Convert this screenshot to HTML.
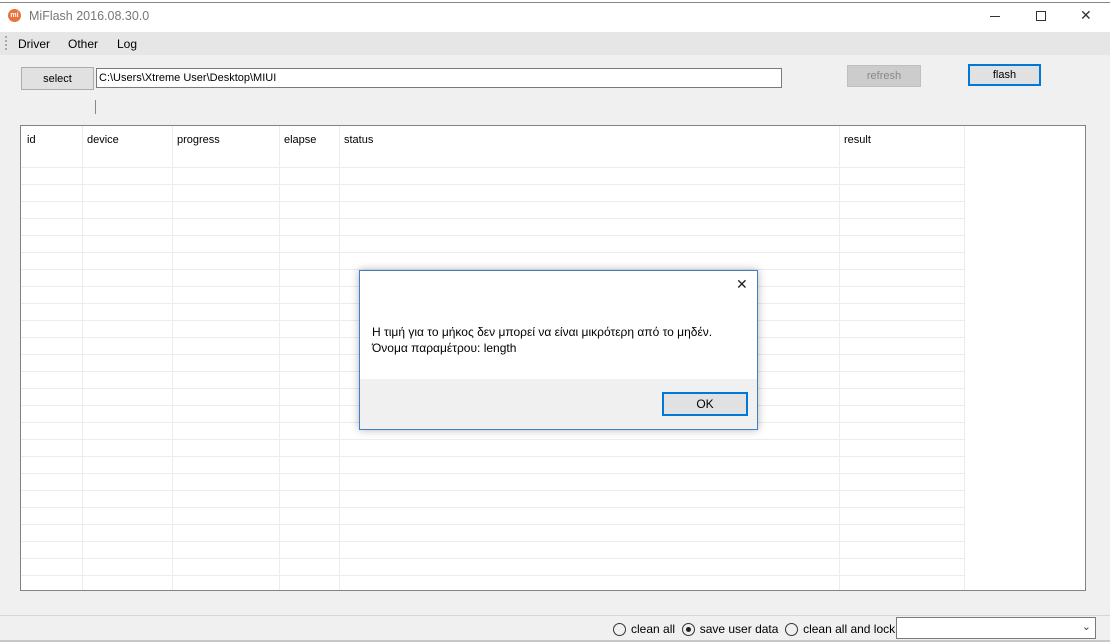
<!DOCTYPE html><html><head><style>
*{margin:0;padding:0;box-sizing:border-box}
body{width:1110px;height:642px;background:#f0f0f0;font-family:"Liberation Sans","DejaVu Sans",sans-serif;font-size:11px;position:relative;overflow:hidden;color:#000}
.a{position:absolute}
.rows div{position:absolute;left:0;width:944px;height:1px;background:#ececec}
.rd{display:inline-block;width:13px;height:13px;border:1px solid #333;border-radius:50%;vertical-align:-3px;position:relative;margin:0 5px 0 0}
</style></head><body>
<div class="a" style="left:0;top:0;width:1110px;height:2px;background:#fff"></div>
<div class="a" style="left:0;top:2px;width:1110px;height:1px;background:#888"></div>
<div class="a" style="left:0;top:3px;width:1110px;height:29px;background:#fff"></div>
<div class="a" style="left:8px;top:9px;width:13px;height:13px;border-radius:50%;background:#e8743b;color:#fff;font-size:7px;text-align:center;line-height:13px;font-weight:bold">mi</div>
<div class="a" style="left:29px;top:9px;color:#777;font-size:12.5px">MiFlash 2016.08.30.0</div>
<div class="a" style="left:990px;top:16px;width:10px;height:1px;background:#333"></div>
<div class="a" style="left:1036px;top:11px;width:10px;height:10px;border:1px solid #333"></div>
<div class="a" style="left:1080px;top:7px;font-size:14px;color:#333">✕</div>
<div class="a" style="left:0;top:32px;width:1110px;height:23px;background:#e6e6e6"></div>
<div class="a" style="left:5px;top:36px;width:2px;height:14px;border-left:2px dotted #aaa"></div>
<div class="a" style="left:18px;top:37px;font-size:12px">Driver</div>
<div class="a" style="left:68px;top:37px;font-size:12px">Other</div>
<div class="a" style="left:117px;top:37px;font-size:12px">Log</div>
<div class="a" style="left:21px;top:67px;width:73px;height:23px;background:#e1e1e1;border:1px solid #adadad;text-align:center;line-height:22px">select</div>
<div class="a" style="left:96px;top:68px;width:686px;height:20px;background:#fff;border:1px solid #7a7a7a;padding:3px 2px">C:\Users\Xtreme User\Desktop\MIUI</div>
<div class="a" style="left:95px;top:100px;width:1px;height:14px;background:#888"></div>
<div class="a" style="left:847px;top:65px;width:74px;height:22px;background:#ccc;border:1px solid #bfbfbf;text-align:center;line-height:20px;color:#888;font-size:11px">refresh</div>
<div class="a" style="left:968px;top:64px;width:73px;height:22px;background:#e1e1e1;border:2px solid #0078d7;text-align:center;line-height:18px">flash</div>
<div class="a" style="left:20px;top:125px;width:1066px;height:466px;background:#fff;border:1px solid #828282;overflow:hidden">
<div class="rows">
<div style="top:41px"></div><div style="top:58px"></div><div style="top:75px"></div><div style="top:92px"></div><div style="top:109px"></div><div style="top:126px"></div><div style="top:143px"></div><div style="top:160px"></div><div style="top:177px"></div><div style="top:194px"></div><div style="top:211px"></div><div style="top:228px"></div><div style="top:245px"></div><div style="top:262px"></div><div style="top:279px"></div><div style="top:296px"></div><div style="top:313px"></div><div style="top:330px"></div><div style="top:347px"></div><div style="top:364px"></div><div style="top:381px"></div><div style="top:398px"></div><div style="top:415px"></div><div style="top:432px"></div><div style="top:449px"></div>
</div>
<div class="a" style="left:61px;top:0;width:1px;height:466px;background:#ececec"></div>
<div class="a" style="left:151px;top:0;width:1px;height:466px;background:#ececec"></div>
<div class="a" style="left:258px;top:0;width:1px;height:466px;background:#ececec"></div>
<div class="a" style="left:318px;top:0;width:1px;height:466px;background:#ececec"></div>
<div class="a" style="left:818px;top:0;width:1px;height:466px;background:#ececec"></div>
<div class="a" style="left:943px;top:0;width:1px;height:466px;background:#ececec"></div>
<div class="a" style="left:6px;top:8px">id</div>
<div class="a" style="left:66px;top:8px">device</div>
<div class="a" style="left:156px;top:8px">progress</div>
<div class="a" style="left:263px;top:8px">elapse</div>
<div class="a" style="left:323px;top:8px">status</div>
<div class="a" style="left:823px;top:8px">result</div>
</div>
<div class="a" style="left:359px;top:270px;width:399px;height:160px;background:#f0f0f0;border:1px solid #3f7fc4;box-shadow:0 0 8px rgba(0,0,0,.3)">
<div class="a" style="left:0;top:0;width:397px;height:108px;background:#fff"></div>
<div class="a" style="left:376px;top:5px;font-size:14px;color:#222">✕</div>
<div class="a" style="left:12px;top:53px;font-size:12px;line-height:16px;white-space:nowrap">Η τιμή για το μήκος δεν μπορεί να είναι μικρότερη από το μηδέν.<br>Όνομα παραμέτρου: length</div>
<div class="a" style="left:302px;top:121px;width:86px;height:24px;background:#e1e1e1;border:2px solid #0078d7;text-align:center;line-height:20px;font-size:12px">OK</div>
</div>
<div class="a" style="left:0;top:615px;width:1110px;height:1px;background:#d6d6d6"></div>
<div class="a" style="left:0;top:640px;width:1110px;height:2px;background:#c8c8c8"></div>
<div class="a" style="left:613px;top:622px;font-size:12px;white-space:nowrap">
<span class="rd"></span>clean all&nbsp; <span class="rd"><span style="position:absolute;left:3px;top:3px;width:5px;height:5px;border-radius:50%;background:#222"></span></span>save user data&nbsp; <span class="rd"></span>clean all and lock</div>
<div class="a" style="left:896px;top:617px;width:200px;height:22px;background:#fff;border:1px solid #7a7a7a"><span style="position:absolute;right:4px;top:2px;font-size:11px;color:#444">⌄</span></div>
</body></html>
